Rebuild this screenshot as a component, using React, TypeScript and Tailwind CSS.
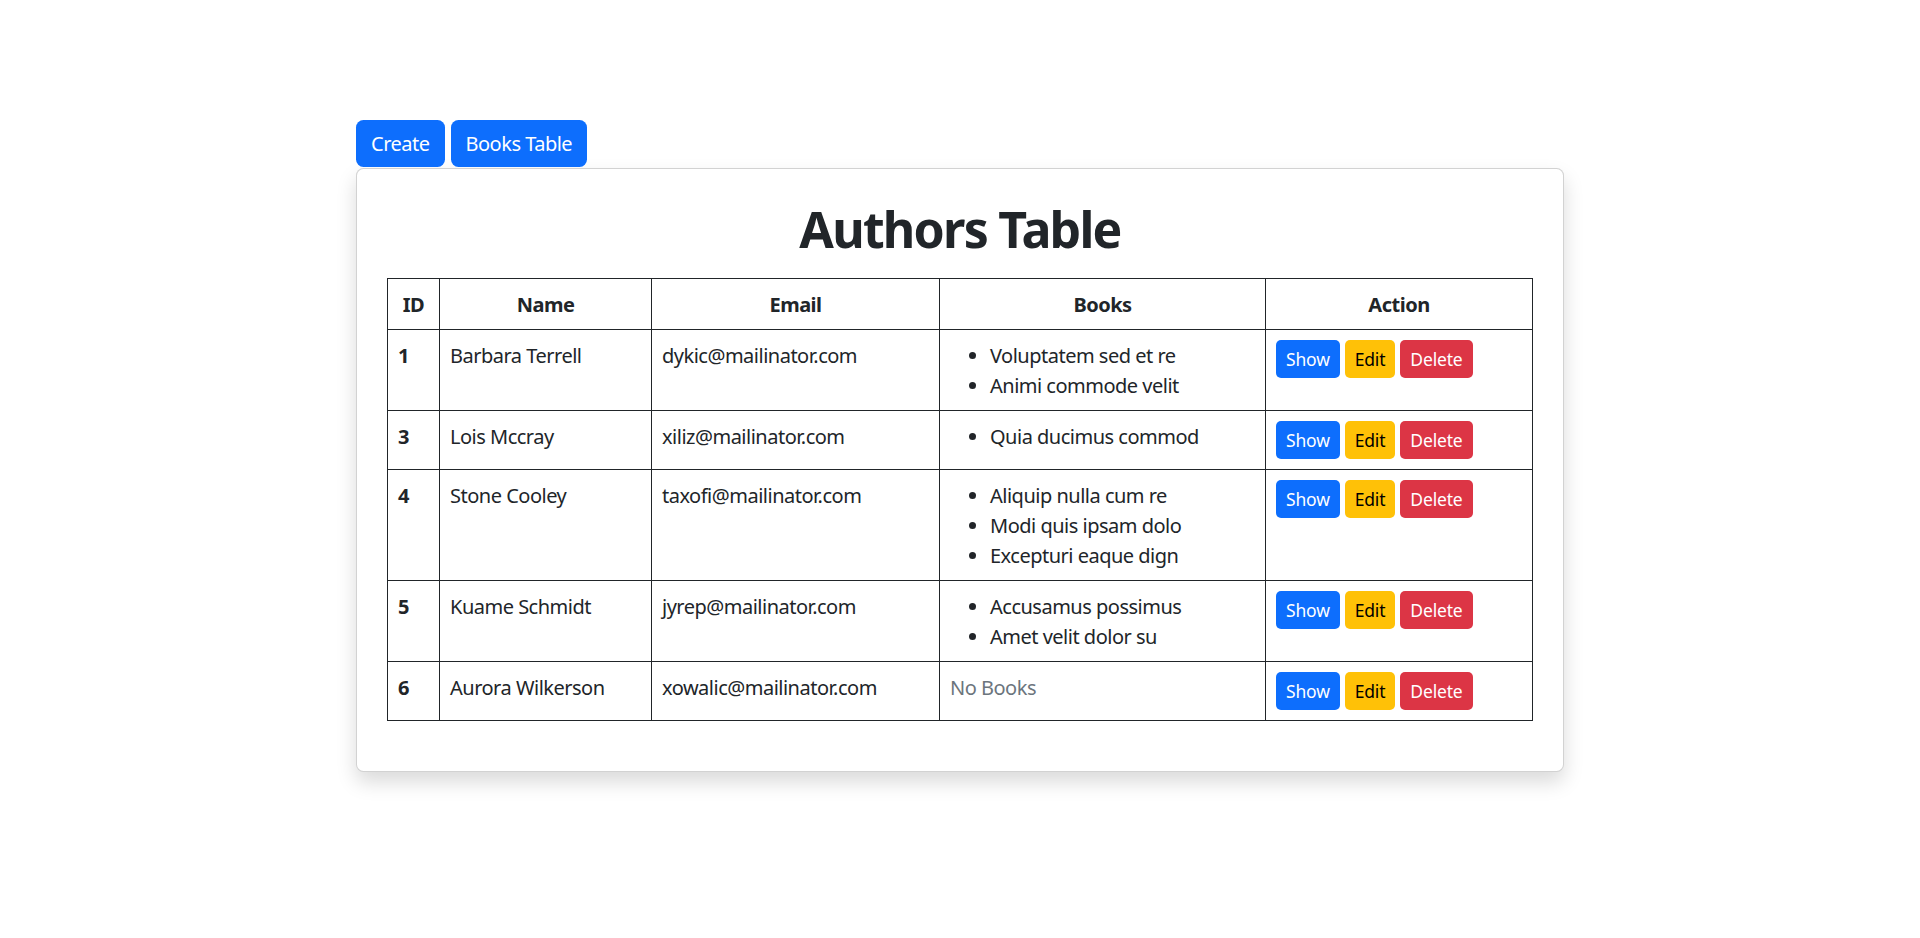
const AUTHORS = [
  { id: 1, name: "Barbara Terrell", email: "dykic@mailinator.com", books: ["Voluptatem sed et re", "Animi commode velit"] },
  { id: 3, name: "Lois Mccray", email: "xiliz@mailinator.com", books: ["Quia ducimus commod"] },
  {
    id: 4,
    name: "Stone Cooley",
    email: "taxofi@mailinator.com",
    books: ["Aliquip nulla cum re", "Modi quis ipsam dolo", "Excepturi eaque dign"],
  },
  { id: 5, name: "Kuame Schmidt", email: "jyrep@mailinator.com", books: ["Accusamus possimus", "Amet velit dolor su"] },
  { id: 6, name: "Aurora Wilkerson", email: "xowalic@mailinator.com", books: [] as string[] },
];

const cell = "border border-[#212529] px-[10px] pt-[11px] pb-[9px] align-top leading-[30px]";
const btnSm = "h-[38px] px-[10px] pt-px rounded-[5px]";

export default function App() {
  return (
    <div className="min-h-screen bg-white text-[20px] text-[#212529] tracking-[-0.025em] font-['Noto_Sans',sans-serif]">
      <div className="mx-auto w-[1208px] pt-[120px]">
        <div className="flex gap-[6px]">
          <button className="h-[47px] px-[15px] pt-px rounded-[7.5px] bg-[#0d6efd] text-white leading-[30px]">Create</button>
          <button className="h-[47px] px-[15px] pt-px rounded-[7.5px] bg-[#0d6efd] text-white leading-[30px]">Books Table</button>
        </div>
        <div className="mt-px bg-white border border-[rgba(0,0,0,0.175)] rounded-[7.5px] shadow-[0_10px_20px_rgba(0,0,0,0.15)] p-[30px]">
          <h1 className="text-center text-[50px] font-bold leading-[60px] mb-[19px] tracking-[-0.035em]">Authors Table</h1>
          <table className="w-full table-fixed border-collapse border border-[#212529] mb-[20px]">
            <colgroup>
              <col className="w-[52px]" />
              <col className="w-[212px]" />
              <col className="w-[288px]" />
              <col className="w-[326px]" />
              <col />
            </colgroup>
            <thead>
              <tr>
                {["ID", "Name", "Email", "Books", "Action"].map((h) => (
                  <th key={h} className={`${cell} text-center font-bold`}>
                    {h}
                  </th>
                ))}
              </tr>
            </thead>
            <tbody>
              {AUTHORS.map((a) => (
                <tr key={a.id}>
                  <th className={`${cell} text-left font-bold`}>{a.id}</th>
                  <td className={cell}>{a.name}</td>
                  <td className={cell}>{a.email}</td>
                  <td className={cell}>
                    {a.books.length ? (
                      <ul className="list-disc pl-[40px] m-0">
                        {a.books.map((b) => (
                          <li key={b}>{b}</li>
                        ))}
                      </ul>
                    ) : (
                      <span className="text-[#6c757d]">No Books</span>
                    )}
                  </td>
                  <td className="border border-[#212529] p-[10px] align-top">
                    <div className="flex gap-[5px] text-[17.5px] tracking-[-0.01em]">
                      <button className={`${btnSm} bg-[#0d6efd] text-white`}>Show</button>
                      <button className={`${btnSm} bg-[#ffc107] text-black`}>Edit</button>
                      <button className={`${btnSm} bg-[#dc3545] text-white`}>Delete</button>
                    </div>
                  </td>
                </tr>
              ))}
            </tbody>
          </table>
        </div>
      </div>
    </div>
  );
}
